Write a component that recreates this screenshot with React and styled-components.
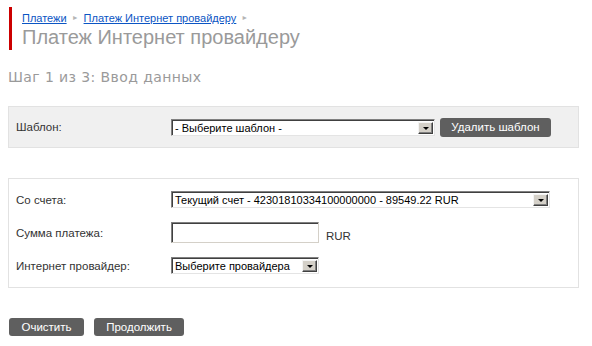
import React from "react";
import styled, { createGlobalStyle } from "styled-components";

const Global = createGlobalStyle`
  html, body {
    margin: 0;
    padding: 0;
    background: #fff;
    font-family: "Liberation Sans", Arial, sans-serif;
  }
`;

const Page = styled.div`
  padding: 7px 13px 0 8px;
  width: 592px;
  box-sizing: border-box;
`;

const Header = styled.div`
  margin-left: 1px;
  border-left: 3px solid #cc0000;
  padding-left: 10px;
  height: 43px;
  box-sizing: border-box;
  padding-top: 5px;
`;

const Crumbs = styled.div`
  display: flex;
  align-items: center;
  gap: 5px;
  font-size: 11px;
  line-height: 12px;
`;

const Crumb = styled.a`
  color: #0b55c4;
  text-decoration: underline;
  cursor: pointer;
`;

const Sep = styled.span`
  color: #b5b5b5;
  font-size: 7px;
`;

const Title = styled.h1`
  margin: 1px 0 0;
  font-weight: normal;
  font-size: 20px;
  line-height: 24px;
  color: #9a9a9a;
  white-space: nowrap;
`;

const Step = styled.h2`
  margin: 18px 0 0;
  font-family: "DejaVu Sans", sans-serif;
  font-weight: normal;
  font-size: 14px;
  letter-spacing: 0.4px;
  line-height: 18px;
  color: #9a9a9a;
  height: 18px;
`;

const Panel = styled.div`
  margin-top: ${(p) => p.$top}px;
  border: 1px solid #e2e2e2;
  background: ${(p) => (p.$grey ? "#f0f0f0" : "#fff")};
  padding: ${(p) => p.$pad};
`;

const Row = styled.div`
  display: grid;
  grid-template-columns: 155px auto;
  align-items: center;
  height: ${(p) => p.$h || 33}px;
  padding-left: 7px;
`;

const Label = styled.span`
  font-size: 11.5px;
  color: #333;
`;

const Field = styled.div`
  display: flex;
  align-items: center;
  gap: ${(p) => p.$gap || 7}px;
`;

const SelectBox = styled.div`
  width: ${(p) => p.$w}px;
  height: 17px;
  box-sizing: border-box;
  display: flex;
  align-items: stretch;
  background: #fff;
  border-top: 1px solid #808080;
  border-left: 1px solid #808080;
  border-bottom: 1px solid #e4e4e4;
  border-right: 1px solid #e4e4e4;
  box-shadow: inset 1px 1px 0 #404040;
  padding: 2px 1px 1px 2px;
`;

const SelectText = styled.span`
  flex: 1;
  font-size: 11px;
  line-height: 12px;
  color: #000;
  padding-left: 1px;
  white-space: nowrap;
  overflow: hidden;
`;

const Arrow = styled.span`
  width: 15px;
  background: #d4d0c8;
  border-top: 1px solid #f4f4f4;
  border-left: 1px solid #f4f4f4;
  border-right: 1px solid #404040;
  border-bottom: 1px solid #404040;
  box-shadow: inset -1px -1px 0 #808080;
  box-sizing: border-box;
  display: flex;
  align-items: center;
  justify-content: center;

  &::after {
    content: "";
    border-left: 3px solid transparent;
    border-right: 3px solid transparent;
    border-top: 3px solid #000;
    margin-top: 1px;
  }
`;

const Input = styled.div`
  width: ${(p) => p.$w}px;
  height: 21px;
  box-sizing: border-box;
  background: #fff;
  border-top: 1px solid #808080;
  border-left: 1px solid #808080;
  border-bottom: 1px solid #d4d0c8;
  border-right: 1px solid #d4d0c8;
  box-shadow: inset 1px 1px 0 #404040;
`;

const Unit = styled.span`
  font-size: 11.5px;
  color: #333;
  margin-top: 6px;
`;

const Button = styled.button`
  background: #5f5f5f;
  color: #fff;
  border: none;
  border-radius: 3px;
  font-family: inherit;
  font-size: 11.5px;
  height: ${(p) => p.$h || 18}px;
  width: ${(p) => p.$w}px;
  padding: 0;
  cursor: pointer;
`;

const Actions = styled.div`
  display: flex;
  gap: 10px;
  margin-top: 30px;
  padding-left: 1px;
`;

function Select({ width, value }) {
  return (
    <SelectBox $w={width}>
      <SelectText>{value}</SelectText>
      <Arrow />
    </SelectBox>
  );
}

export default function App() {
  return (
    <>
      <Global />
      <Page>
        <Header>
          <Crumbs>
            <Crumb>Платежи</Crumb>
            <Sep>►</Sep>
            <Crumb>Платеж Интернет провайдеру</Crumb>
            <Sep>►</Sep>
          </Crumbs>
          <Title>Платеж Интернет провайдеру</Title>
        </Header>
        <Step>Шаг 1 из 3: Ввод данных</Step>

        <Panel $top={20} $grey $pad="0">
          <Row $h={40}>
            <Label>Шаблон:</Label>
            <Field $gap={5}>
              <Select width={264} value="- Выберите шаблон -" />
              <Button $w={111} $h={19}>Удалить шаблон</Button>
            </Field>
          </Row>
        </Panel>

        <Panel $top={30} $pad="4px 0 5px">
          <Row>
            <Label>Со счета:</Label>
            <Select width={379} value="Текущий счет - 42301810334100000000 - 89549.22 RUR" />
          </Row>
          <Row>
            <Label>Сумма платежа:</Label>
            <Field>
              <Input $w={148} />
              <Unit>RUR</Unit>
            </Field>
          </Row>
          <Row>
            <Label>Интернет провайдер:</Label>
            <Select width={148} value="Выберите провайдера" />
          </Row>
        </Panel>

        <Actions>
          <Button $w={75}>Очистить</Button>
          <Button $w={90}>Продолжить</Button>
        </Actions>
      </Page>
    </>
  );
}
